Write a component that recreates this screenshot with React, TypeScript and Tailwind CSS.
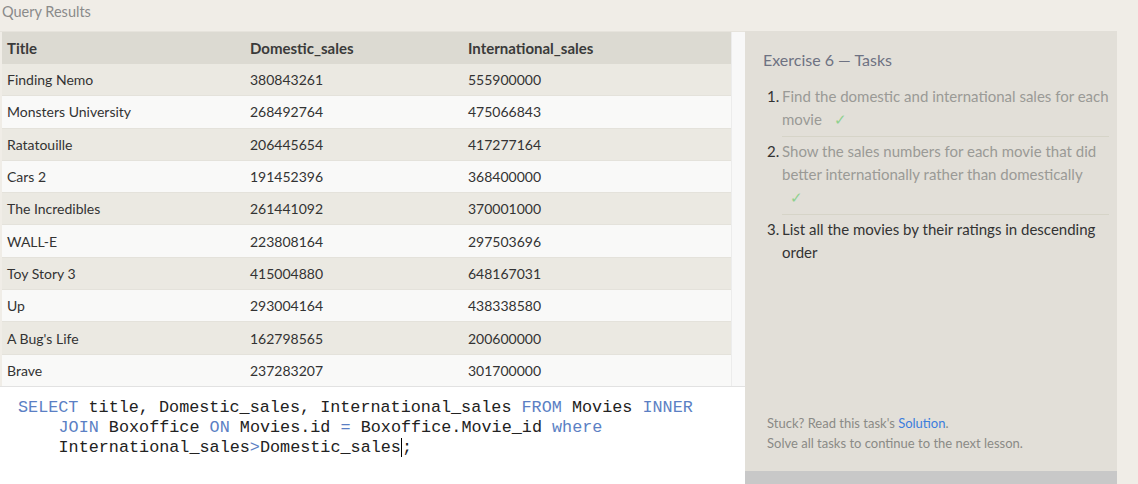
import React from 'react';

const rows: [string, string, string][] = [
  ['Finding Nemo', '380843261', '555900000'],
  ['Monsters University', '268492764', '475066843'],
  ['Ratatouille', '206445654', '417277164'],
  ['Cars 2', '191452396', '368400000'],
  ['The Incredibles', '261441092', '370001000'],
  ['WALL-E', '223808164', '297503696'],
  ['Toy Story 3', '415004880', '648167031'],
  ['Up', '293004164', '438338580'],
  ["A Bug's Life", '162798565', '200600000'],
  ['Brave', '237283207', '301700000'],
];

const sans = { fontFamily: 'Lato, "Open Sans", sans-serif' };

function Check() {
  return <span className="ml-[12px] text-[#8fd18f]">✓</span>;
}

export default function App() {
  return (
    <div className="flex h-[484px] w-[1138px] overflow-hidden bg-[#f0ede7]" style={sans}>
      {/* left column */}
      <div className="flex w-[745px] shrink-0 flex-col">
        <div className="h-[31px] pl-[2px] pt-[1px] text-[14.5px] text-[#8a8a8a]">Query Results</div>

        <div className="flex h-[355px] border-t border-[#e6e3dc] pl-[2px]">
          <div className="w-[729px]">
            <div className="flex h-[32px] items-center bg-[#dcdad2] text-[15px] font-bold text-[#3a3a3a]">
              <div className="w-[248px] pl-[5px]">Title</div>
              <div className="w-[218px]">Domestic_sales</div>
              <div className="flex-1">International_sales</div>
            </div>
            {rows.map((r, i) => (
              <div
                key={r[0]}
                className={
                  'flex h-[32.3px] items-center border-b border-[#e4e2db] text-[14px] text-[#333] ' +
                  (i % 2 === 0 ? 'bg-[#ebe9e2]' : 'bg-[#f9f9f8]')
                }
              >
                <div className="w-[248px] pl-[5px]">{r[0]}</div>
                <div className="w-[218px]">{r[1]}</div>
                <div className="flex-1">{r[2]}</div>
              </div>
            ))}
          </div>
          <div className="w-[14px] border-l border-[#ececec] bg-[#f8f8f8]" />
        </div>

        {/* editor */}
        <div
          className="flex-1 border-t border-[#e2e2e2] bg-white pl-[18px] pt-[11px] text-[16.8px] leading-[20px] text-[#222]"
          style={{ fontFamily: '"Liberation Mono", "DejaVu Sans Mono", monospace' }}
        >
          <div className="whitespace-pre">
            <span className="text-[#5b7fc4]">SELECT</span> title, Domestic_sales, International_sales{' '}
            <span className="text-[#5b7fc4]">FROM</span> Movies <span className="text-[#5b7fc4]">INNER</span>
          </div>
          <div className="whitespace-pre pl-[40.5px]">
            <span className="text-[#5b7fc4]">JOIN</span> Boxoffice <span className="text-[#5b7fc4]">ON</span> Movies.id{' '}
            <span className="text-[#5b7fc4]">=</span> Boxoffice.Movie_id <span className="text-[#5b7fc4]">where</span>
          </div>
          <div className="whitespace-pre pl-[40.5px]">
            International_sales<span className="text-[#5b7fc4]">&gt;</span>Domestic_sales
            <span className="border-l border-black">;</span>
          </div>
        </div>
      </div>

      {/* tasks panel */}
      <div className="mt-[31px] flex w-[372px] shrink-0 flex-col bg-[#e2dfd8]">
        <div className="flex flex-1 flex-col pl-[18px] pr-[8px] pt-[17px]">
          <h2 className="text-[16px] text-[#6e7282]">Exercise 6 — Tasks</h2>
          <ol className="mt-[13px] pl-[4px] text-[15px] leading-[23px]">
            <li className="flex text-[#9a9a96]">
              <span className="w-[15px] shrink-0 text-[#333]">1.</span>
              <div className="flex-1 border-b border-[#d6d4c8] pb-[5px]">
                Find the domestic and international sales for each movie
                <Check />
              </div>
            </li>
            <li className="mt-[3px] flex text-[#9a9a96]">
              <span className="w-[15px] shrink-0 text-[#333]">2.</span>
              <div className="flex-1 border-b border-[#d6d4c8] pb-[5px]">
                Show the sales numbers for each movie that did better internationally rather than domestically
                <br />
                <span className="ml-[8px] text-[#8fd18f]">✓</span>
              </div>
            </li>
            <li className="mt-[3px] flex text-[#333]">
              <span className="w-[15px] shrink-0">3.</span>
              <div className="flex-1">List all the movies by their ratings in descending order</div>
            </li>
          </ol>
          <div className="mt-auto pb-[18px] pl-[4px] text-[13px] leading-[20px] text-[#8a8a86]">
            <div>
              Stuck? Read this task's <span className="text-[#3b7ddd]">Solution</span>.
            </div>
            <div>Solve all tasks to continue to the next lesson.</div>
          </div>
        </div>
        <div className="h-[13px] bg-[#c8c8c8]" />
      </div>
    </div>
  );
}
